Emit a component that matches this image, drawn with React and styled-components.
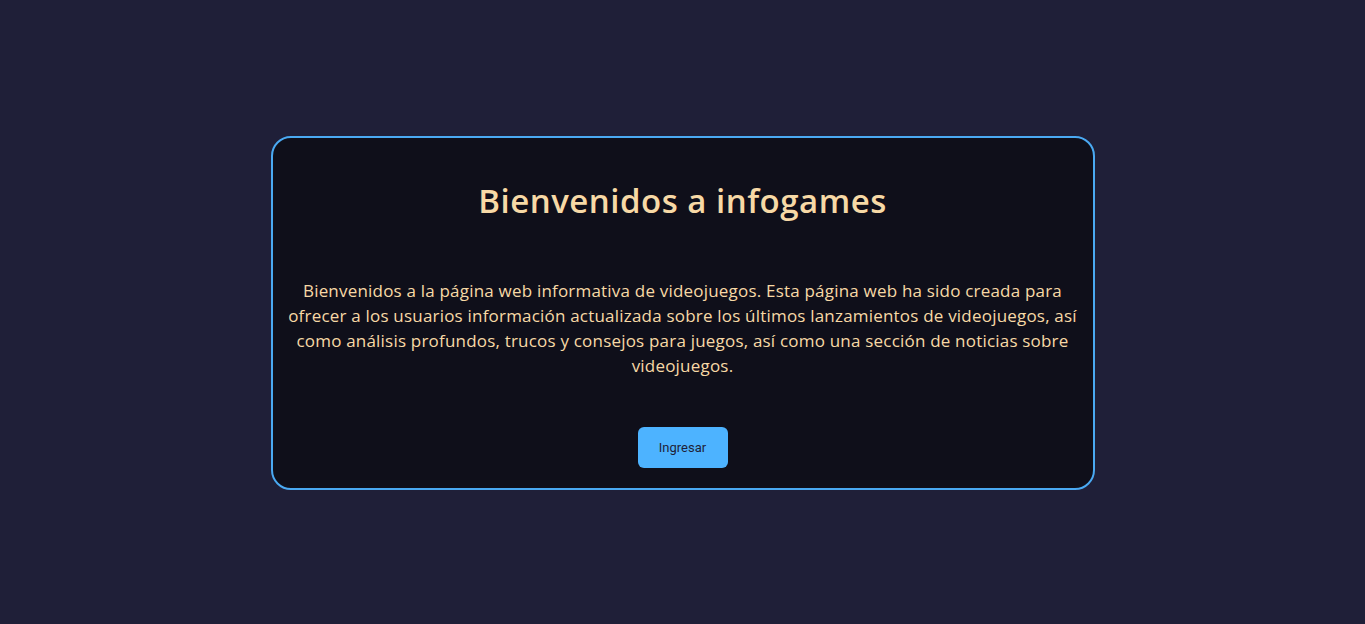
import React from 'react';
import styled, { createGlobalStyle } from 'styled-components';

const GlobalStyle = createGlobalStyle`
  html, body {
    margin: 0;
    padding: 0;
    background-color: #1f1f38;
    font-family: 'Open Sans', 'Liberation Sans', sans-serif;
  }
`;

const Page = styled.main`
  min-height: 100vh;
  box-sizing: border-box;
  padding-top: 2px;
  display: flex;
  align-items: center;
  justify-content: center;
`;

const Card = styled.section`
  width: 824px;
  box-sizing: border-box;
  padding: 20px 14px;
  background-color: #0f0f1a;
  border: 2px solid #4aa9f2;
  border-radius: 20px;
  display: flex;
  flex-direction: column;
  align-items: center;
  text-align: center;
`;

const Title = styled.h1`
  margin: 19px 0 0;
  font-size: 33px;
  line-height: 48px;
  font-weight: 600;
  letter-spacing: 0.5px;
  color: #f7d9a6;
`;

const Intro = styled.p`
  margin: 53px 0 0;
  font-size: 17px;
  line-height: 25px;
  letter-spacing: 0.2px;
  white-space: nowrap;
  color: #f7d9a6;
`;

const Button = styled.button`
  margin-top: 49px;
  width: 90px;
  height: 41px;
  border: none;
  border-radius: 6px;
  background-color: #4db3ff;
  color: #1f1f38;
  font-family: Roboto, 'Liberation Sans', sans-serif;
  font-size: 13px;
  cursor: pointer;
`;

export default function App() {
  return (
    <>
      <GlobalStyle />
      <Page>
        <Card>
          <Title>Bienvenidos a infogames</Title>
          <Intro>
            Bienvenidos a la página web informativa de videojuegos. Esta página web ha sido creada para
            <br />
            ofrecer a los usuarios información actualizada sobre los últimos lanzamientos de videojuegos, así
            <br />
            como análisis profundos, trucos y consejos para juegos, así como una sección de noticias sobre
            <br />
            videojuegos.
          </Intro>
          <Button>Ingresar</Button>
        </Card>
      </Page>
    </>
  );
}
